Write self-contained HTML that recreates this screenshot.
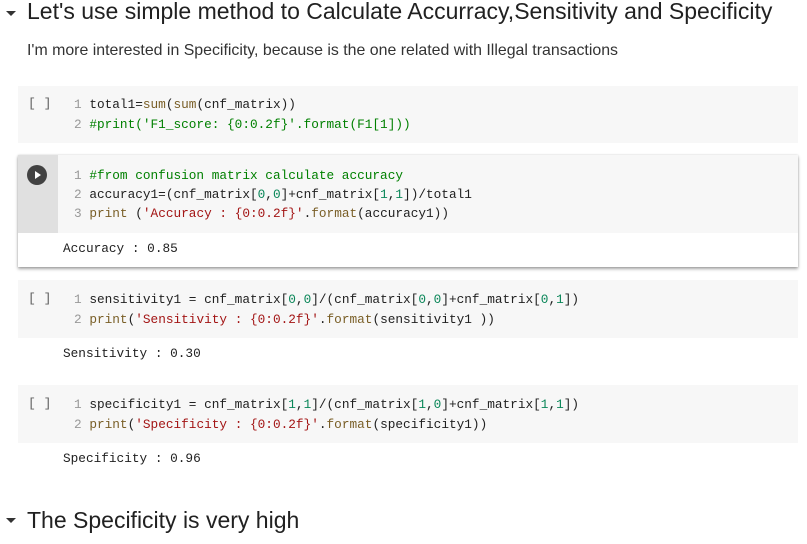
<!DOCTYPE html>
<html><head><meta charset="utf-8"><style>
body{margin:0;width:807px;height:544px;background:#fff;position:relative;overflow:hidden;font-family:"Liberation Sans",sans-serif;color:#212121}
.abs{position:absolute}
.cell{position:absolute;left:18px;width:780px;background:#f7f7f7}
.code{position:absolute;left:74px;font-family:"Liberation Mono",monospace;font-size:12.75px;line-height:19px;white-space:pre;color:#212121}
.ln{color:#999}
.c{color:#008000}.s{color:#a31515}.n{color:#098658}.f{color:#795e26}
.br{position:absolute;left:28px;font-family:"Liberation Mono",monospace;font-size:13px;color:#616161}
.out{position:absolute;left:63px;font-family:"Liberation Mono",monospace;font-size:12.75px;color:#212121;white-space:pre}
.tri{position:absolute;width:0;height:0;border-left:5px solid transparent;border-right:5px solid transparent;border-top:5px solid #333}
</style></head><body>
<div class="tri" style="left:6px;top:11px"></div>
<div class="abs" style="left:27px;top:-2px;font-size:23px;white-space:nowrap">Let's use simple method to Calculate Accurracy,Sensitivity and Specificity</div>
<div class="abs" style="left:27px;top:42px;font-size:15.9px;white-space:nowrap;color:#333">I'm more interested in Specificity, because is the one related with Illegal transactions</div>

<div class="cell" style="top:86px;height:57px"></div>
<div class="br" style="top:96px">[ ]</div>
<div class="code" style="top:95px;line-height:20px"><span class="ln">1 </span>total1=<span class="f">sum</span>(<span class="f">sum</span>(cnf_matrix))
<span class="ln">2 </span><span class="c">#print('F1_score: {0:0.2f}'.format(F1[1]))</span></div>

<div class="abs" style="left:18px;top:155px;width:780px;height:112px;background:#fff;box-shadow:0 2px 3px rgba(0,0,0,.35),0 0 2px rgba(0,0,0,.15)"></div>
<div class="abs" style="left:18px;top:155px;width:40px;height:78px;background:#e0e0e0"></div>
<div class="abs" style="left:58px;top:155px;width:740px;height:78px;background:#f7f7f7"></div>
<div class="abs" style="left:27px;top:165px;width:20px;height:20px;border-radius:50%;background:#424242"></div>
<div class="abs" style="left:35px;top:171px;width:0;height:0;border-top:4px solid transparent;border-bottom:4px solid transparent;border-left:6px solid #fff"></div>
<div class="code" style="top:166px"><span class="ln">1 </span><span class="c">#from confusion matrix calculate accuracy</span>
<span class="ln">2 </span>accuracy1=(cnf_matrix[<span class="n">0</span>,<span class="n">0</span>]+cnf_matrix[<span class="n">1</span>,<span class="n">1</span>])/total1
<span class="ln">3 </span><span class="f">print</span> (<span class="s">'Accuracy : {0:0.2f}'</span>.<span class="f">format</span>(accuracy1))</div>
<div class="out" style="top:241px">Accuracy : 0.85</div>

<div class="cell" style="top:280px;height:58px"></div>
<div class="br" style="top:291px">[ ]</div>
<div class="code" style="top:290px;line-height:20px"><span class="ln">1 </span>sensitivity1 = cnf_matrix[<span class="n">0</span>,<span class="n">0</span>]/(cnf_matrix[<span class="n">0</span>,<span class="n">0</span>]+cnf_matrix[<span class="n">0</span>,<span class="n">1</span>])
<span class="ln">2 </span><span class="f">print</span>(<span class="s">'Sensitivity : {0:0.2f}'</span>.<span class="f">format</span>(sensitivity1 ))</div>
<div class="out" style="top:346px">Sensitivity : 0.30</div>

<div class="cell" style="top:385px;height:58px"></div>
<div class="br" style="top:396px">[ ]</div>
<div class="code" style="top:395px;line-height:20px"><span class="ln">1 </span>specificity1 = cnf_matrix[<span class="n">1</span>,<span class="n">1</span>]/(cnf_matrix[<span class="n">1</span>,<span class="n">0</span>]+cnf_matrix[<span class="n">1</span>,<span class="n">1</span>])
<span class="ln">2 </span><span class="f">print</span>(<span class="s">'Specificity : {0:0.2f}'</span>.<span class="f">format</span>(specificity1))</div>
<div class="out" style="top:451px">Specificity : 0.96</div>

<div class="tri" style="left:6px;top:518px"></div>
<div class="abs" style="left:27px;top:507px;font-size:23px;white-space:nowrap">The Specificity is very high</div>
</body></html>
